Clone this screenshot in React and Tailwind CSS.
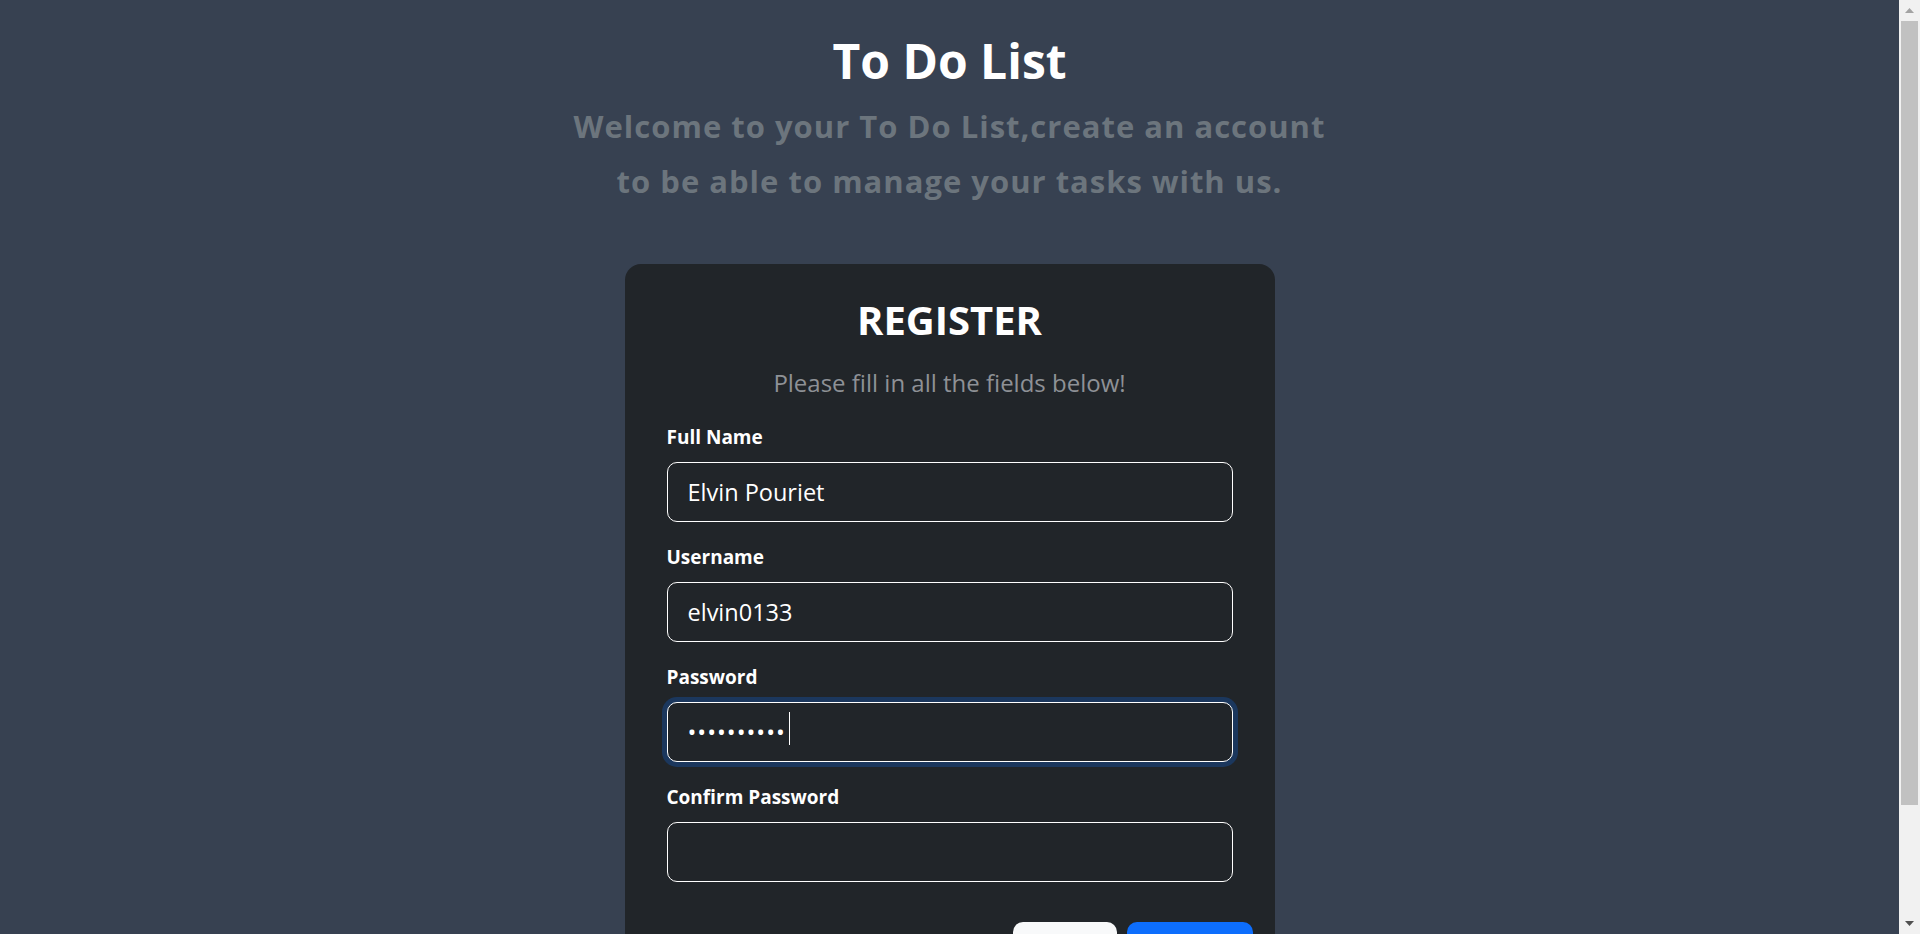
import React from 'react';

const fields = [
  { label: 'Full Name', type: 'text', value: 'Elvin Pouriet' },
  { label: 'Username', type: 'text', value: 'elvin0133' },
  { label: 'Password', type: 'password', value: 'elvin01333', focused: true },
  { label: 'Confirm Password', type: 'password', value: '' },
];

function Field({ label, type, value, focused }) {
  return (
    <div className="flex flex-col">
      <label className="text-[19px] leading-[27px] font-bold text-white">{label}</label>
      <div className="relative mt-[11px]">
        <input
          type={type}
          value={value}
          readOnly
          className={
            focused
              ? 'h-[60px] w-full rounded-[10px] border border-white bg-[#212529] px-[20px] text-[23.5px] tracking-[1px] text-white outline-none shadow-[0_0_0_5px_rgba(13,110,253,0.25)]'
              : 'h-[60px] w-full rounded-[10px] border border-white bg-[#212529] px-[20px] text-[23.5px] text-white outline-none'
          }
        />
        {/* fake caret for the focused field */}
        {focused && <span className="absolute left-[122px] top-[10px] h-[33px] w-px bg-white" />}
      </div>
    </div>
  );
}

function Scrollbar() {
  return (
    <div className="flex h-full w-[21px] shrink-0 flex-col items-center bg-[#f1f1f1]">
      <div className="flex h-[21px] w-full items-center justify-center">
        <svg width="9" height="5" viewBox="0 0 9 5">
          <path d="M4.5 0 L9 5 L0 5 Z" fill="#a3a3a3" />
        </svg>
      </div>
      <div className="h-[784px] w-[17px] bg-[#c1c1c1]" />
      <div className="flex-1" />
      <div className="flex h-[21px] w-full items-center justify-center">
        <svg width="9" height="5" viewBox="0 0 9 5">
          <path d="M0 0 L9 0 L4.5 5 Z" fill="#505050" />
        </svg>
      </div>
    </div>
  );
}

export default function App() {
  return (
    <div className="flex h-screen overflow-hidden bg-[#374151] font-['Open_Sans','Noto_Sans',sans-serif] text-white">
      <main className="min-w-0 flex-1 pb-[60px]">
        {/* Heading */}
        <header className="pt-[31px] text-center">
          <h1 className="text-[48px] leading-[60px] font-bold">To Do List</h1>
          <p className="mt-[8px] text-[31px] leading-[55px] font-bold tracking-[1px] text-[#6c757d] whitespace-nowrap">
            Welcome to your To Do List,create an account
            <br />
            to be able to manage your tasks with us.
          </p>
        </header>

        {/* Register card */}
        <div className="mx-auto mt-[55px] w-[650px] rounded-[16px] bg-[#212529] px-[42px] pt-[32px] pb-[40px]">
          <h2 className="text-center text-[40px] leading-[48px] font-bold">REGISTER</h2>
          <p className="mt-[20px] text-center text-[24px] leading-[37px] text-[#8e9196]">
            Please fill in all the fields below!
          </p>

          <form className="mt-[23px] flex flex-col gap-[22px]">
            {fields.map((f) => (
              <Field key={f.label} {...f} />
            ))}
          </form>

          <div className="mt-[40px] -mr-[20px] flex justify-end gap-[10px]">
            <button className="h-[60px] w-[104px] rounded-[10px] bg-[#f8f9fa] text-[24px] text-[#212529]">Login</button>
            <button className="h-[60px] w-[126px] rounded-[10px] bg-[#0d6efd] text-[24px] text-white">Register</button>
          </div>
        </div>
      </main>
      <Scrollbar />
    </div>
  );
}
